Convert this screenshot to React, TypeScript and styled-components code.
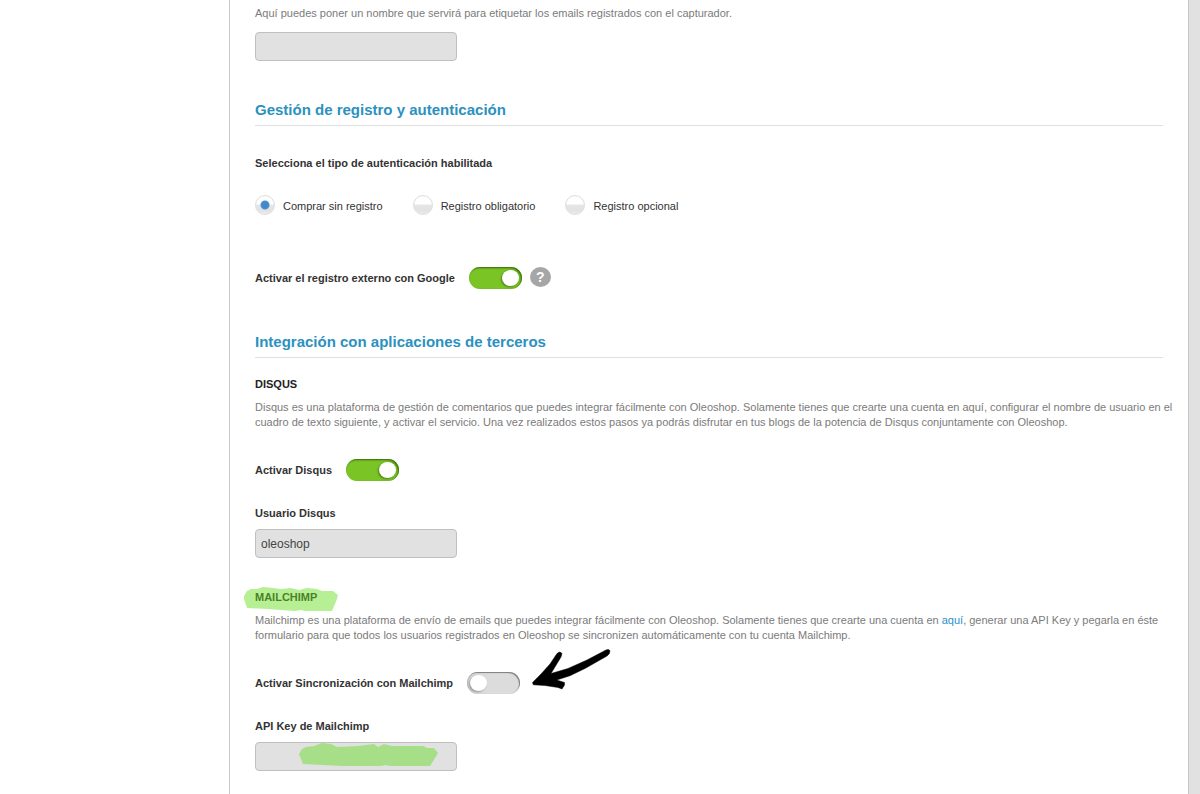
import React, { useId, useState } from "react";
import styled, { createGlobalStyle } from "styled-components";

const GlobalStyle = createGlobalStyle`
  *, *::before, *::after { box-sizing: border-box; }
  html, body { margin: 0; padding: 0; }
  body {
    background: #e1e1e1;
    color: #333;
    font-family: "Liberation Sans", Arial, sans-serif;
    font-size: 11px;
    line-height: 15px;
  }
  h2, h3, p { margin: 0; }
`;

const Page = styled.div`
  display: flex;
  min-height: 100vh;
  margin-right: 11px;
  background: #fff;
  border-right: 1px solid #c8c8c8;
`;

const Sidebar = styled.aside`
  flex: 0 0 229px;
`;

const Main = styled.main`
  flex: 1;
  min-width: 0;
  padding: 6px 25px 23px;
  border-left: 1px solid #c8c8c8;
`;

const Section = styled.section<{ $gap: number }>`
  margin-top: ${(p) => p.$gap}px;
`;

const SectionTitle = styled.h2`
  padding-bottom: 5px;
  border-bottom: 1px solid #e0e0e0;
  color: #2b91bf;
  font-size: 15px;
  line-height: 20px;
`;

const Block = styled.div<{ $gap: number }>`
  margin-top: ${(p) => p.$gap}px;
`;

const Subtitle = styled.h3`
  display: inline-block;
  position: relative;
  color: #222;
  font-size: 11px;
  line-height: 15px;
  vertical-align: top;
`;

const Description = styled.p<{ $gap?: number }>`
  margin-top: ${(p) => p.$gap ?? 0}px;
  margin-right: -12px;
  color: #7b7b7b;
`;

const Link = styled.a`
  color: #2b91d0;
  text-decoration: none;
`;

const FieldLabel = styled.label`
  display: block;
  margin-bottom: 8px;
  font-weight: bold;
`;

const InputFrame = styled.div`
  position: relative;
  width: 202px;
`;

const TextInput = styled.input`
  display: block;
  width: 100%;
  height: 29px;
  padding: 0 5px;
  border: 1px solid #c0c0c0;
  border-radius: 4px;
  background: #e1e1e1;
  color: #444;
  font: 12px "Liberation Sans", Arial, sans-serif;
  outline: none;
`;

const RadioGroup = styled.fieldset`
  margin: 30px 0 0;
  padding: 0;
  border: 0;
`;

const Legend = styled.legend`
  margin-bottom: 24px;
  padding: 0;
  font-weight: bold;
`;

const RadioRow = styled.div`
  display: flex;
  gap: 30px;
`;

const RadioLabel = styled.label`
  display: flex;
  align-items: flex-start;
  gap: 8px;
  height: 20px;
  line-height: 22px;
`;

const Radio = styled.input`
  appearance: none;
  width: 20px;
  height: 20px;
  margin: 0;
  border: 1px solid #dedede;
  border-radius: 50%;
  background: linear-gradient(#fff 0 45%, #e6e6e6 50%, #e2e2e2 80%, #ececec);
  box-shadow: inset 0 0 1px #ececec;
  &:checked {
    background:
      radial-gradient(circle at center, #4389c8 0 3px, #4f93cf 4px, transparent 5px),
      linear-gradient(#fff 0 45%, #e6e6e6 50%, #e2e2e2 80%, #ececec);
  }
`;

const ToggleRow = styled.div<{ $gap: number }>`
  display: flex;
  align-items: center;
  height: 22px;
  margin-top: ${(p) => p.$gap}px;
`;

const ToggleLabel = styled.label`
  margin-right: 14px;
  font-weight: bold;
`;

const Switch = styled.input`
  appearance: none;
  display: flex;
  align-items: center;
  width: 53px;
  height: 22px;
  margin: 0;
  padding: 0 3px;
  border-radius: 11px;
  background: #dcdcdc;
  box-shadow: inset -1px 1px 1px #7d7d7d, inset 1px 0 1px #b8b8b8;
  &::before {
    content: "";
    width: 17px;
    height: 16px;
    border-radius: 50%;
    background: #fff;
    box-shadow: -1px 1px 2px rgba(0, 0, 0, 0.35);
  }
  &:checked {
    justify-content: flex-end;
    background: #7ac426;
    box-shadow: inset -1px 1px 2px #35650a;
  }
`;

const HelpButton = styled.button`
  width: 21px;
  height: 20px;
  margin: 0 0 2px 8px;
  padding: 0;
  border: 0;
  border-radius: 50%;
  background: #a6a6a6;
  color: #fff;
  font: bold 14px/20px "Liberation Sans", Arial, sans-serif;
`;

const TitleMarker = styled.svg`
  position: absolute;
  top: -4px;
  left: -12px;
  width: 96px;
  height: 25px;
  pointer-events: none;
`;

const FieldMarker = styled.svg`
  position: absolute;
  top: 1px;
  left: 43px;
  width: 141px;
  height: 25px;
  pointer-events: none;
`;

const ArrowBox = styled.span`
  position: relative;
  align-self: flex-start;
`;

const Arrow = styled.svg`
  position: absolute;
  top: -24px;
  left: 11px;
  width: 82px;
  height: 44px;
  pointer-events: none;
`;

function TextField({ label, value = "", children }: { label: string; value?: string; children?: React.ReactNode }) {
  const id = useId();
  const [text, setText] = useState(value);
  return (
    <>
      <FieldLabel htmlFor={id}>{label}</FieldLabel>
      <InputFrame>
        <TextInput id={id} type="text" value={text} onChange={(e) => setText(e.target.value)} />
        {children}
      </InputFrame>
    </>
  );
}

function Toggle({ label, gap, on = false, children }: { label: string; gap: number; on?: boolean; children?: React.ReactNode }) {
  const id = useId();
  return (
    <ToggleRow $gap={gap}>
      <ToggleLabel htmlFor={id}>{label}</ToggleLabel>
      <Switch id={id} type="checkbox" role="switch" defaultChecked={on} />
      {children}
    </ToggleRow>
  );
}

const authOptions = ["Comprar sin registro", "Registro obligatorio", "Registro opcional"];

export default function App() {
  const tagId = useId();
  const [tag, setTag] = useState("");
  return (
    <>
      <GlobalStyle />
      <Page>
        <Sidebar />
        <Main>
          <Description>
            <label htmlFor={tagId}>
              Aquí puedes poner un nombre que servirá para etiquetar los emails registrados con el capturador.
            </label>
          </Description>
          <Block $gap={11}>
            <InputFrame>
              <TextInput id={tagId} type="text" value={tag} onChange={(e) => setTag(e.target.value)} />
            </InputFrame>
          </Block>

          <Section $gap={39}>
            <SectionTitle>Gestión de registro y autenticación</SectionTitle>
            <RadioGroup>
              <Legend>Selecciona el tipo de autenticación habilitada</Legend>
              <RadioRow>
                {authOptions.map((option, i) => (
                  <RadioLabel key={option}>
                    <Radio type="radio" name="auth" defaultChecked={i === 0} />
                    {option}
                  </RadioLabel>
                ))}
              </RadioRow>
            </RadioGroup>
            <Toggle label="Activar el registro externo con Google" gap={52} on>
              <HelpButton type="button">?</HelpButton>
            </Toggle>
          </Section>

          <Section $gap={43}>
            <SectionTitle>Integración con aplicaciones de terceros</SectionTitle>
            <Block $gap={19}>
              <Subtitle>DISQUS</Subtitle>
              <Description $gap={8}>
                Disqus es una plataforma de gestión de comentarios que puedes integrar fácilmente con Oleoshop. Solamente
                tienes que crearte una cuenta en aquí, configurar el nombre de usuario en el cuadro de texto siguiente, y
                activar el servicio. Una vez realizados estos pasos ya podrás disfrutar en tus blogs de la potencia de
                Disqus conjuntamente con Oleoshop.
              </Description>
              <Toggle label="Activar Disqus" gap={29} on />
              <Block $gap={25}>
                <TextField label="Usuario Disqus" value="oleoshop" />
              </Block>
            </Block>

            <Block $gap={32}>
              <Subtitle>
                MAILCHIMP
                <TitleMarker viewBox="0 0 96 25" aria-hidden="true">
                  <path
                    d="M1 10 L4 5 L8 3 L14 3 L20 1 L30 2 L38 3 L48 2 L56 4 L64 2 L74 3 L79 5 L90 5 L95 9 L94 13 L89 25 L62 25 L58 24 L52 25 L24 23 L4 22 L1 13 Z"
                    fill="#70e02c"
                    fillOpacity="0.5"
                  />
                </TitleMarker>
              </Subtitle>
              <Description $gap={8}>
                Mailchimp es una plataforma de envío de emails que puedes integrar fácilmente con Oleoshop. Solamente
                tienes que crearte una cuenta en <Link href="#">aquí</Link>, generar una API Key y pegarla en éste
                formulario para que todos los usuarios registrados en Oleoshop se sincronizen automáticamente con tu
                cuenta Mailchimp.
              </Description>
              <Toggle label="Activar Sincronización con Mailchimp" gap={29}>
                <ArrowBox>
                  <Arrow viewBox="0 0 82 44" aria-hidden="true">
                    <path
                      d="M1.5 34.5 L10 26 L19 16 L26 5.5 Q29 2.5 31 5.5 L30 9 L20 25.5 L37 20.5 L56 12 L74 2.5 Q78 0.5 79 3 Q79 6 76 8 L54 20.5 L39 27.7 L25.7 32 L33.5 34.5 L33.5 37 L31 41 L27 39.5 L14 37.5 L2.3 36.8 Z"
                      fill="#000"
                      stroke="#000"
                      strokeOpacity="0.5"
                      strokeLinejoin="round"
                    />
                  </Arrow>
                </ArrowBox>
              </Toggle>
              <Block $gap={25}>
                <TextField label="API Key de Mailchimp">
                  <FieldMarker viewBox="0 0 141 25" aria-hidden="true">
                    <path
                      d="M1 11 L4 6 L8 4 L16 3 L24 0 L33 1 L39 4 L60 3 L76 1 L80 4 L86 1 L94 3 L125 3 L129 5 L136 5 L140 10 L137 15 L132 23 L92 23 L88 22 L83 23 L45 23 L5 21 Z"
                      fill="#a7df88"
                    />
                  </FieldMarker>
                </TextField>
              </Block>
            </Block>
          </Section>
        </Main>
      </Page>
    </>
  );
}
